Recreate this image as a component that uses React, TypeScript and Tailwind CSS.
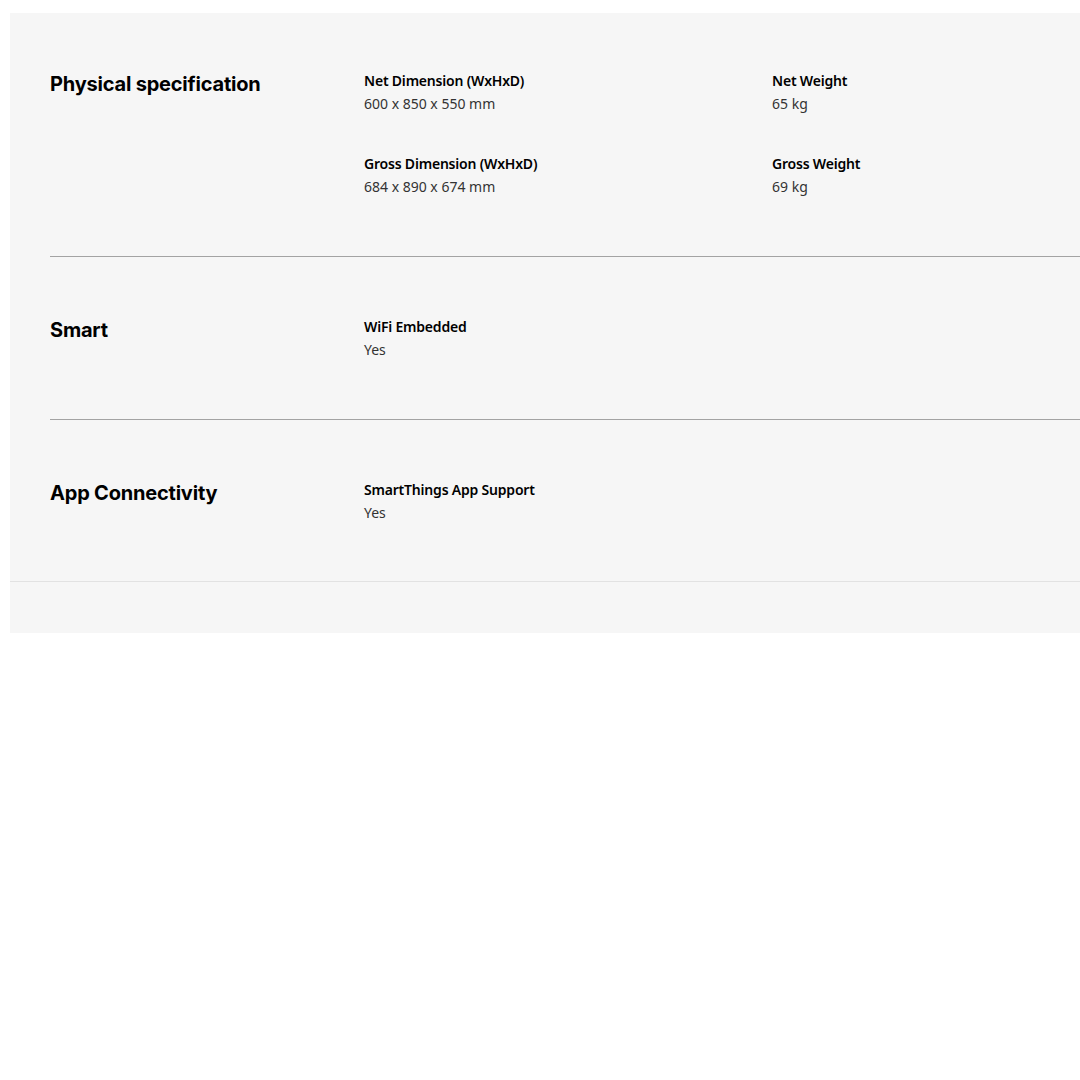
import React from "react";

type Spec = { label: string; value: string };

const sections: { title: string; specs: Spec[] }[] = [
  {
    title: "Physical specification",
    specs: [
      { label: "Net Dimension (WxHxD)", value: "600 x 850 x 550 mm" },
      { label: "Net Weight", value: "65 kg" },
      { label: "Gross Dimension (WxHxD)", value: "684 x 890 x 674 mm" },
      { label: "Gross Weight", value: "69 kg" },
    ],
  },
  { title: "Smart", specs: [{ label: "WiFi Embedded", value: "Yes" }] },
  { title: "App Connectivity", specs: [{ label: "SmartThings App Support", value: "Yes" }] },
];

export default function App() {
  return (
    <div className="w-[1080px] h-[1080px] bg-white overflow-hidden pt-[13px] pl-[10px]">
      <div className="w-[1100px] bg-[#f6f6f6] pb-[51px]">
        <div className="border-b border-[#e2e2e2]">
          {sections.map((s, i) => (
            <div
              key={s.title}
              className={`ml-[40px] flex ${i === 0 ? "pt-[56px] pb-[58px]" : i === 1 ? "py-[58px]" : "pt-[58px] pb-[57px]"} ${i < sections.length - 1 ? "border-b border-[#a3a3a3]" : ""}`}
            >
              <h2
                className="w-[314px] shrink-0 pt-[2px] text-[20px] leading-[26px] font-bold text-black tracking-[-0.2px]"
                style={{ fontFamily: "Inter, 'Noto Sans', sans-serif" }}
              >
                {s.title}
              </h2>
              <div
                className="grid grid-cols-[408px_408px] gap-y-[37px]"
                style={{ fontFamily: "'Noto Sans', 'Open Sans', sans-serif" }}
              >
                {s.specs.map((sp) => (
                  <div key={sp.label} className="flex flex-col">
                    <span className="text-[14px] leading-[23px] font-semibold text-black tracking-[-0.2px]">
                      {sp.label}
                    </span>
                    <span className="text-[14px] leading-[23px] text-[#333]">{sp.value}</span>
                  </div>
                ))}
              </div>
            </div>
          ))}
        </div>
      </div>
    </div>
  );
}
